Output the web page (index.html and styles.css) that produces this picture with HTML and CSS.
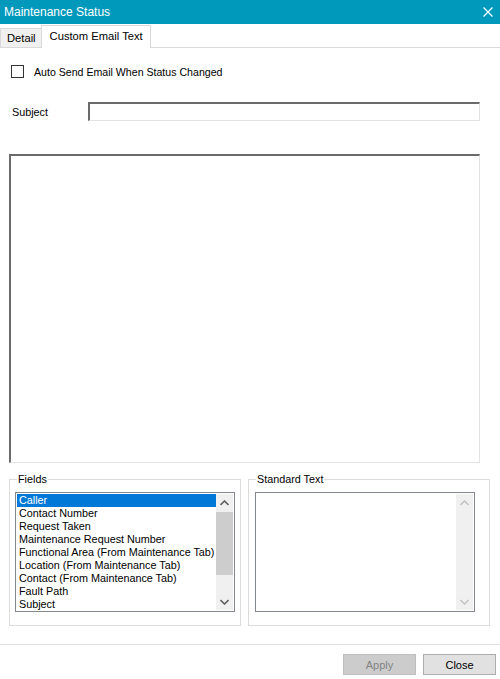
FILE: index.html
```html
<!DOCTYPE html>
<html lang="en">
<head>
  <meta charset="UTF-8">
  <title>Maintenance Status</title>
  <link rel="stylesheet" href="styles.css">
</head>
<body>
<div class="window">
  <div class="titlebar">
    <span class="title">Maintenance Status</span>
    <svg class="close-x" width="10" height="10" viewBox="0 0 10 10">
      <path d="M0.5 0.5 L9.5 9.5 M9.5 0.5 L0.5 9.5" stroke="#fff" stroke-width="1.2" fill="none"/>
    </svg>
  </div>

  <div class="tabs">
    <div class="tab">Detail</div>
    <div class="tab active">Custom Email Text</div>
  </div>

  <div class="tab-page">
    <label class="check-row">
      <span class="checkbox"></span>
      <span>Auto Send Email When Status Changed</span>
    </label>

    <div class="subject-row">
      <span class="subject-label">Subject</span>
      <div class="textbox subject-box"></div>
    </div>

    <div class="textbox body-box"></div>

    <div class="groups">
      <fieldset class="group fields-group">
        <legend>Fields</legend>
        <div class="listbox">
          <div class="list-items">
            <div class="item selected">Caller</div>
            <div class="item">Contact Number</div>
            <div class="item">Request Taken</div>
            <div class="item">Maintenance Request Number</div>
            <div class="item">Functional Area (From Maintenance Tab)</div>
            <div class="item">Location (From Maintenance Tab)</div>
            <div class="item">Contact (From Maintenance Tab)</div>
            <div class="item">Fault Path</div>
            <div class="item">Subject</div>
          </div>
          <div class="scrollbar">
            <div class="arrow">
              <svg width="9" height="6" viewBox="0 0 9 6"><path d="M0.5 5 L4.5 1 L8.5 5" stroke="#606060" stroke-width="1.6" fill="none"/></svg>
            </div>
            <div class="track">
              <div class="thumb"></div>
            </div>
            <div class="arrow">
              <svg width="9" height="6" viewBox="0 0 9 6"><path d="M0.5 1 L4.5 5 L8.5 1" stroke="#606060" stroke-width="1.6" fill="none"/></svg>
            </div>
          </div>
        </div>
      </fieldset>

      <fieldset class="group standard-group">
        <legend>Standard Text</legend>
        <div class="listbox">
          <div class="list-items"></div>
          <div class="scrollbar disabled">
            <div class="arrow">
              <svg width="9" height="6" viewBox="0 0 9 6"><path d="M0.5 5 L4.5 1 L8.5 5" stroke="#c0c0c0" stroke-width="1.4" fill="none"/></svg>
            </div>
            <div class="track"></div>
            <div class="arrow">
              <svg width="9" height="6" viewBox="0 0 9 6"><path d="M0.5 1 L4.5 5 L8.5 1" stroke="#c0c0c0" stroke-width="1.4" fill="none"/></svg>
            </div>
          </div>
        </div>
      </fieldset>
    </div>
  </div>

  <div class="footer">
    <button class="btn" disabled>Apply</button>
    <button class="btn">Close</button>
  </div>
</div>
</body>
</html>
```

FILE: styles.css
```css
body {
  margin: 0;
  background: #fff;
  font-family: "Liberation Sans", Arial, sans-serif;
  font-size: 10.8px;
  color: #000;
}
.window {
  width: 500px;
  height: 679px;
  display: flex;
  flex-direction: column;
}
.titlebar {
  height: 23px;
  background-color: #0099bc;
  color: #fff;
  display: flex;
  align-items: center;
  justify-content: space-between;
  padding: 0 6px 1px 4px;
  font-size: 12px;
}
.close-x {
  margin-right: 1px;
}
.tabs {
  height: 22px;
  margin-top: 1px;
  display: flex;
  align-items: flex-end;
  border-bottom: 1px solid #d9d9d9;
}
.tab {
  height: 18px;
  line-height: 19px;
  padding: 0 5px 0 6px;
  background: #f0f0f0;
  border: 1px solid #d9d9d9;
  border-bottom: none;
  font-size: 11.2px;
}
.tab.active {
  height: 22px;
  line-height: 21px;
  background: #fff;
  padding: 0 7px 0 8px;
  margin-bottom: -1px;
  margin-left: -1px;
}
.tab-page {
  padding: 17px 10px 0 9px;
  flex: 1;
}
.check-row {
  display: flex;
  align-items: center;
  gap: 10px;
  padding-left: 2px;
  font-size: 10.6px;
}
.checkbox {
  width: 11px;
  height: 11px;
  border: 1px solid #333;
  background: #fff;
}
.subject-row {
  display: flex;
  align-items: center;
  margin-top: 24px;
}
.subject-label {
  width: 76px;
  padding-left: 3px;
}
.textbox {
  background: #fff;
  border-top: 2px solid #6b6b6b;
  border-left: 2px solid #6b6b6b;
  border-right: 1px solid #e3e3e3;
  border-bottom: 1px solid #e3e3e3;
  box-sizing: border-box;
}
.subject-box {
  width: 392px;
  height: 19px;
}
.body-box {
  margin-top: 33px;
  width: 471px;
  height: 309px;
}
.groups {
  display: flex;
  gap: 7px;
  margin-top: 10px;
}
.group {
  margin: 0;
  min-width: 0;
  border: 1px solid #dcdcdc;
  padding: 6px 5px 0 5px;
  box-sizing: border-box;
  height: 153px;
}
.group legend {
  padding: 0 1px;
  margin-left: 2px;
  line-height: 13px;
}
.fields-group {
  width: 232px;
}
.standard-group {
  width: 242px;
  padding-left: 6px;
}
.standard-group legend {
  margin-left: 1px;
}
.listbox {
  border: 1px solid #828790;
  height: 120px;
  box-sizing: border-box;
  display: flex;
  padding: 1px;
  background: #fff;
}
.standard-group .listbox {
  width: 220px;
}
.list-items {
  flex: 1;
  overflow: hidden;
}
.item {
  height: 13px;
  line-height: 13px;
  padding-left: 2px;
  white-space: nowrap;
}
.item.selected {
  background: #0078d7;
  color: #fff;
}
.scrollbar {
  width: 17px;
  background: #f0f0f0;
  display: flex;
  flex-direction: column;
}
.arrow {
  height: 17px;
  display: flex;
  align-items: center;
  justify-content: center;
}
.track {
  flex: 1;
  padding-top: 1px;
}
.thumb {
  height: 63px;
  background: #cdcdcd;
}
.footer {
  height: 35px;
  border-top: 1px solid #dfdfdf;
  display: flex;
  justify-content: flex-end;
  align-items: flex-start;
  gap: 7px;
  padding: 9px 4px 0 0;
  box-sizing: border-box;
}
.btn {
  width: 73px;
  height: 21px;
  background: #e1e1e1;
  border: 1px solid #adadad;
  font-family: "Liberation Sans", Arial, sans-serif;
  font-size: 11px;
  color: #000;
  padding: 0;
}
.btn:disabled {
  background: #cccccc;
  border-color: #bfbfbf;
  color: #838383;
}
```
